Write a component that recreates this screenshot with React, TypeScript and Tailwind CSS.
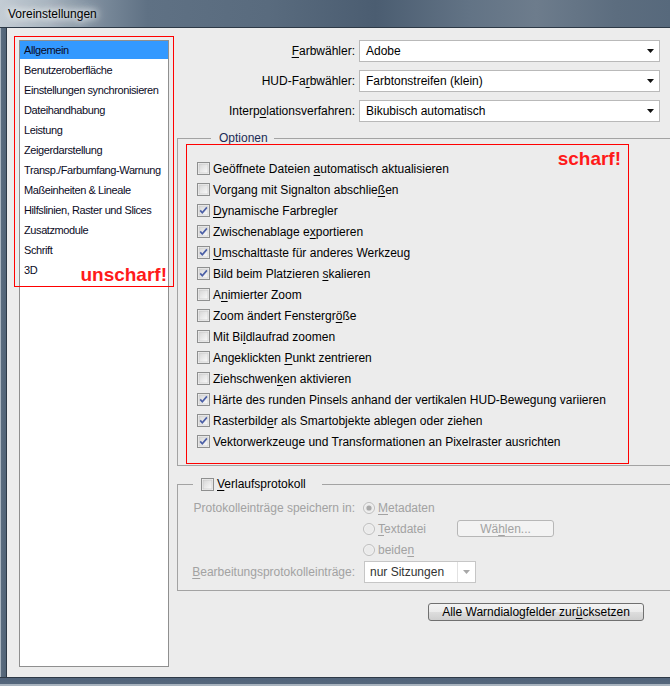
import type { ReactNode } from "react";

const categories = [
  "Allgemein",
  "Benutzeroberfläche",
  "Einstellungen synchronisieren",
  "Dateihandhabung",
  "Leistung",
  "Zeigerdarstellung",
  "Transp./Farbumfang-Warnung",
  "Maßeinheiten & Lineale",
  "Hilfslinien, Raster und Slices",
  "Zusatzmodule",
  "Schrift",
  "3D",
];

// [before, underlined letter, after, checked]
const options: [string, string, string, boolean][] = [
  ["Geöffnete Dateien ", "a", "utomatisch aktualisieren", false],
  ["Vorgang mit Signalton abschlie", "ß", "en", false],
  ["", "D", "ynamische Farbregler", true],
  ["Zwischenablage e", "x", "portieren", true],
  ["", "U", "mschalttaste für anderes Werkzeug", true],
  ["Bild beim Platzieren ", "s", "kalieren", true],
  ["A", "n", "imierter Zoom", false],
  ["Zoom ändert Fenstergr", "ö", "ße", false],
  ["Mit Bi", "l", "dlaufrad zoomen", false],
  ["Angeklickten ", "P", "unkt zentrieren", false],
  ["Ziehschwen", "k", "en aktivieren", false],
  ["Härte des runden Pinsels anhand der vertikalen HUD-Bewegung variieren", "", "", true],
  ["Rasterbild", "e", "r als Smartobjekte ablegen oder ziehen", true],
  ["Vektorwerkzeuge und Transformationen an Pixelraster ausrichten", "", "", true],
];

const U = ({ children }: { children: ReactNode }) => (
  <span className="underline decoration-1 underline-offset-[2px]">{children}</span>
);

function CheckBox({ checked }: { checked?: boolean }) {
  return (
    <svg width="13" height="13" viewBox="0 0 13 13" className="shrink-0">
      <defs>
        <linearGradient id="cbfill" x1="0" y1="0" x2="1" y2="1">
          <stop offset="0" stopColor="#d6d6d6" />
          <stop offset="1" stopColor="#fbfbfb" />
        </linearGradient>
      </defs>
      <rect x="0.5" y="0.5" width="12" height="12" fill="#f4f4f4" stroke="#8e8f8f" />
      <rect x="2" y="2" width="9" height="9" fill="url(#cbfill)" stroke="#c4c4c4" strokeWidth="0.6" />
      {checked && (
        <path d="M3.2 6.4l2.1 2.4L9.9 3.4" fill="none" stroke="#4b5fa6" strokeWidth="1.7" />
      )}
    </svg>
  );
}

function Radio({ checked }: { checked?: boolean }) {
  return (
    <svg width="12" height="12" viewBox="0 0 12 12" className="shrink-0">
      <circle cx="6" cy="6" r="5.5" fill="#f2f2f2" stroke="#bdbdbd" />
      <circle cx="6" cy="6" r="4" fill="#ebebeb" />
      {checked && <circle cx="6" cy="6" r="2.6" fill="#a9a9a9" />}
    </svg>
  );
}

function Select({ value }: { value: string }) {
  return (
    <div className="w-[301px] h-[22px] bg-white border border-[#b9b9b9] flex items-center pl-[6px] pr-[5px]">
      <span className="flex-1">{value}</span>
      <svg width="7" height="4" viewBox="0 0 7 4">
        <path d="M0 0h7L3.5 4z" fill="#111" />
      </svg>
    </div>
  );
}

function SelectRow({ label, value }: { label: ReactNode; value: string }) {
  return (
    <div className="flex items-center gap-[4px]">
      <span className="w-[178px] text-right">{label}</span>
      <Select value={value} />
    </div>
  );
}

export default function App() {
  return (
    <div className="w-[670px] h-[686px] overflow-hidden flex flex-col bg-[#56687b] font-['Liberation_Sans',Arial,sans-serif] text-[12px] leading-[14px] text-black">
      {/* title bar */}
      <div className="h-[27px] shrink-0 flex items-center pl-[8px] bg-[linear-gradient(90deg,#c3ccd4_0%,#a9b5c0_7%,#7e8e9e_14%,#5f7184_22%,#596b7e_40%,#4b5d71_56%,#627385_70%,#6d7c8c_80%,#5c6d7f_92%,#57697c_100%)]">
        <span className="[text-shadow:0_0_6px_#fff,0_0_10px_#fff,0_0_14px_#e8edf2]">Voreinstellungen</span>
      </div>
      <div className="h-px shrink-0 bg-[#2d3946]" />

      <div className="flex flex-1 min-h-0">
        <div className="w-[6px] shrink-0 bg-[linear-gradient(90deg,#a9b4bf_0%,#a9b4bf_16%,#5a6c7f_17%,#516376_100%)]" />
        <div className="w-px shrink-0 bg-[#2d3946]" />

        {/* dialog body */}
        <div className="flex-1 relative overflow-hidden bg-[#ececec] flex gap-[8px] pt-[12px] pl-[12px]">
          <div className="w-[150px] h-[627px] shrink-0 bg-white border border-[#8f8f8f] text-[11px] tracking-[-0.4px] text-[#0a0a1e]">
            {categories.map((c, i) => (
              <div key={c} className="h-[20px]">
                <div className={`h-[18px] leading-[18px] pl-[4px] ${i === 0 ? "bg-[#3399ff]" : ""}`}>{c}</div>
              </div>
            ))}
          </div>

          <div className="w-[500px] shrink-0 flex flex-col">
            <div className="flex flex-col gap-[8px]">
              <SelectRow label={<><U>F</U>arbwähler:</>} value="Adobe" />
              <SelectRow label={<>HUD-Fa<U>r</U>bwähler:</>} value="Farbtonstreifen (klein)" />
              <SelectRow label={<>Interp<U>o</U>lationsverfahren:</>} value="Bikubisch automatisch" />
            </div>

            <fieldset className="relative mt-[9px] w-[495px] border border-[#a3a3a3] pt-[13px] pb-[13px] pl-[19px]">
              <legend className="ml-[14px] pl-[8px] pr-[6px] h-[14px] text-[#1b2a55]">Optionen</legend>
              {options.map(([a, u, b, on]) => (
                <div key={a + u + b} className="h-[21px] flex items-center gap-[3px]">
                  <CheckBox checked={on} />
                  <span>
                    {a}
                    {u && <U>{u}</U>}
                    {b}
                  </span>
                </div>
              ))}
              <div className="absolute left-[8px] top-[-1px] w-[443px] h-[320px] border border-[#ff0000]">
                <span className="absolute top-[4px] right-[7px] text-[19px] leading-[20px] font-bold text-[#ff1a1a]">scharf!</span>
              </div>
            </fieldset>

            <fieldset className="mt-[11px] w-[495px] border border-[#a3a3a3] pt-[6px] pb-[7px]">
              <legend className="ml-[15px] pl-[8px] pr-[16px] h-[14px] flex items-center gap-[3px]">
                <CheckBox />
                <span>
                  <U>V</U>erlaufsprotokoll
                </span>
              </legend>
              <div className="flex h-[21px] items-center">
                <span className="w-[177px] text-right text-[#a2a2a2]">Protokolleinträge speichern in:</span>
                <div className="ml-[8px] flex items-center gap-[3px] text-[#a2a2a2]">
                  <Radio checked />
                  <span>
                    <U>M</U>etadaten
                  </span>
                </div>
              </div>
              <div className="flex h-[21px] items-center">
                <div className="ml-[185px] w-[94px] flex items-center gap-[3px] text-[#a2a2a2]">
                  <Radio />
                  <span>
                    <U>T</U>extdatei
                  </span>
                </div>
                <div className="w-[97px] h-[17px] flex items-center justify-center rounded-[3px] border border-[#b7b7b7] bg-[#f3f3f3] text-[#a2a2a2]">
                  <span>
                    Wä<U>h</U>len...
                  </span>
                </div>
              </div>
              <div className="flex h-[21px] items-center">
                <div className="ml-[185px] flex items-center gap-[3px] text-[#a2a2a2]">
                  <Radio />
                  <span>
                    beide<U>n</U>
                  </span>
                </div>
              </div>
              <div className="flex h-[22px] mt-px items-center">
                <span className="w-[177px] text-right text-[#a2a2a2]">
                  <U>B</U>earbeitungsprotokolleinträge:
                </span>
                <div className="ml-[9px] w-[112px] h-[22px] bg-white border border-[#c6c6c6] flex items-center">
                  <span className="flex-1 pl-[5px] text-[#333]">nur Sitzungen</span>
                  <div className="w-[18px] h-full border-l border-[#e2e2e2] flex items-center justify-center">
                    <svg width="7" height="4" viewBox="0 0 7 4">
                      <path d="M0 0h7L3.5 4z" fill="#a8a8a8" />
                    </svg>
                  </div>
                </div>
              </div>
            </fieldset>

            <div className="mt-[12px] ml-[251px] w-[216px] h-[18px] flex items-center justify-center rounded-[3px] border border-[#707070] bg-[linear-gradient(#f3f3f3_0%,#ebebeb_50%,#dddddd_51%,#cfcfcf_100%)]">
              <span>
                Alle Warndialogfelder zur<U>ü</U>cksetzen
              </span>
            </div>
          </div>

          {/* red markers over the category list */}
          <div className="absolute left-[7px] top-[8px] w-[160px] h-[251px] border border-[#ff0000]">
            <span className="absolute bottom-[1px] right-[6px] text-[19px] leading-[20px] font-bold text-[#ff1a1a]">unscharf!</span>
          </div>
        </div>
      </div>

      <div className="h-px shrink-0 bg-[#2d3946]" />
      <div className="h-[8px] shrink-0 bg-[linear-gradient(180deg,#51637a_0%,#56687c_80%,#a9b4bf_81%,#a9b4bf_100%)]" />
    </div>
  );
}
